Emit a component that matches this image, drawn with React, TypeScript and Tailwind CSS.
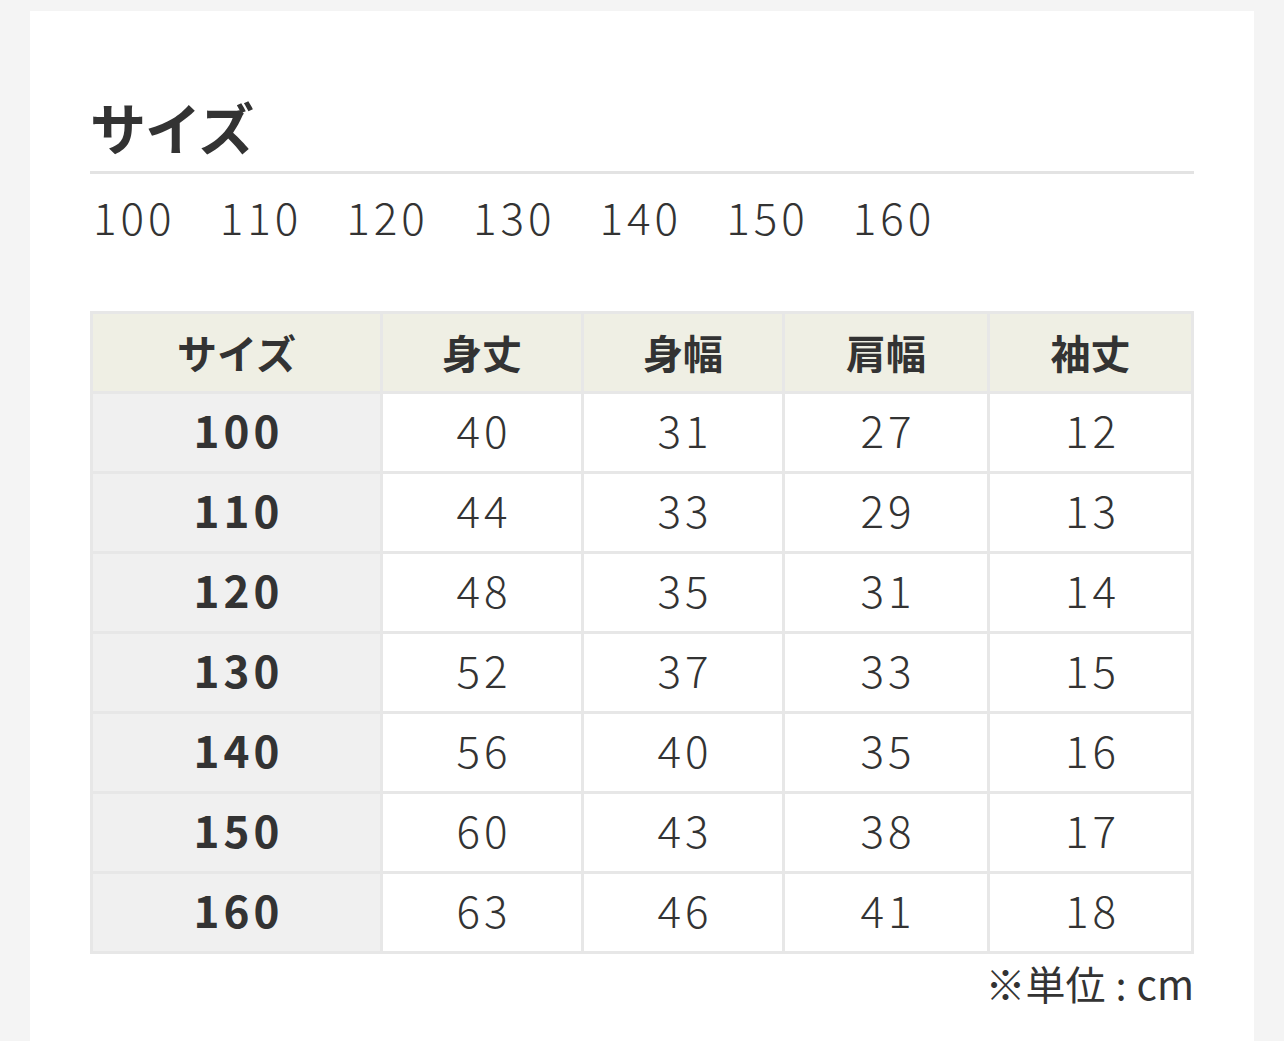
const sizes = ["100", "110", "120", "130", "140", "150", "160"];

const headers = ["サイズ", "身丈", "身幅", "肩幅", "袖丈"];

const rows: [string, string, string, string, string][] = [
  ["100", "40", "31", "27", "12"],
  ["110", "44", "33", "29", "13"],
  ["120", "48", "35", "31", "14"],
  ["130", "52", "37", "33", "15"],
  ["140", "56", "40", "35", "16"],
  ["150", "60", "43", "38", "17"],
  ["160", "63", "46", "41", "18"],
];

export default function App() {
  return (
    <div
      className="min-h-[1041px] bg-[#f4f4f4] pt-[11px] px-[30px] text-[#333333]"
      style={{ fontFamily: '"Noto Sans CJK JP", "Noto Sans", sans-serif' }}
    >
      <div className="bg-white px-[60px] pt-[77px] pb-[30px]">
        <h2 className="text-[56px] font-bold leading-[76px] tracking-[-1px]">サイズ</h2>
        <div className="h-[3px] bg-[#e3e3e3] mt-[7px]" />
        <div className="flex gap-[44px] pl-[3px] mt-[7px] text-[44px] leading-[70px] font-light tracking-[4px]">
          {sizes.map((s) => (
            <span key={s}>{s}</span>
          ))}
        </div>

        <table className="w-full table-fixed border-collapse mt-[60px]">
          <colgroup>
            <col className="w-[290px]" />
            <col className="w-[201px]" />
            <col className="w-[201px]" />
            <col className="w-[205px]" />
            <col />
          </colgroup>
          <thead>
            <tr className="h-[80px] bg-[#efefe4]">
              {headers.map((h) => (
                <th
                  key={h}
                  className="border-[3px] border-[#e7e7e7] text-[40px] font-bold text-center p-0 pb-[2px]"
                >
                  {h}
                </th>
              ))}
            </tr>
          </thead>
          <tbody>
            {rows.map((r) => (
              <tr key={r[0]} className="h-[80px]">
                {r.map((v, i) => (
                  <td
                    key={i}
                    className={
                      i === 0
                        ? "border-[3px] border-[#e7e7e7] bg-[#f0f0f0] text-[44px] font-bold text-center p-0 pb-[7px] pl-[4px] tracking-[4px]"
                        : "border-[3px] border-[#e7e7e7] text-[44px] font-light text-center p-0 pb-[7px] pl-[4px] tracking-[4px]"
                    }
                  >
                    {v}
                  </td>
                ))}
              </tr>
            ))}
          </tbody>
        </table>

        <p className="text-right text-[40px] leading-[64px] -mt-[3px]">
          ※単位<span className="mx-[10px]">:</span>cm
        </p>
      </div>
    </div>
  );
}
